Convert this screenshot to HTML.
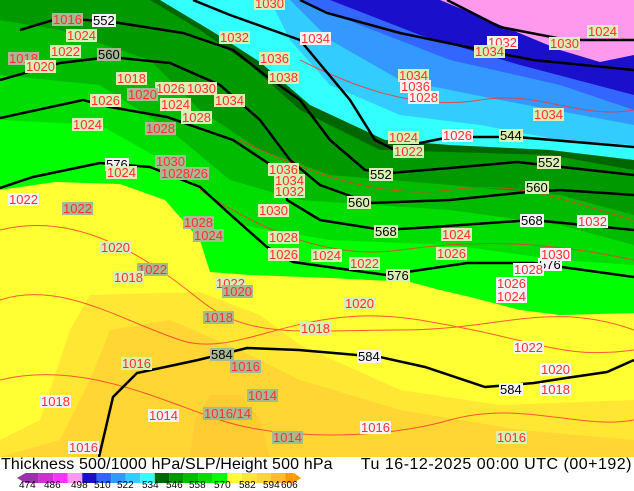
<!DOCTYPE html>
<html><head><meta charset="utf-8"><style>
body{margin:0;width:634px;height:490px;overflow:hidden;background:#fff;font-family:"Liberation Sans",sans-serif}
#m{position:absolute;left:0;top:0}
.l{position:absolute;font:13px/13px "Liberation Sans",sans-serif;color:#ff3030;background:#d9f0b4;padding:0 1px;height:13px}
.g{background:#a8b890}
.w{background:#f4f4f4}
.k{color:#000}
#t{position:absolute;left:0;top:457px;width:634px;height:33px;background:#fff}
#t1{position:absolute;left:1px;top:457px;font:16px/16px "Liberation Sans",sans-serif;letter-spacing:0.15px}
#t2{position:absolute;right:2px;top:457px;font:16px/16px "Liberation Sans",sans-serif;letter-spacing:0.5px}
#lg{position:absolute;left:17px;top:473px}
.n{position:absolute;top:481px;font:10px/10px "Liberation Sans",sans-serif}
</style></head><body>
<svg id="m" width="634" height="457" viewBox="0 0 634 457">
<rect width="634" height="457" fill="#ffff33"/>
<path d="M0,457 L0,440 L40,420 L70,330 L90,295 L200,292 L260,315 L300,345 L400,390 L500,405 L634,400 L634,457Z" fill="#ffe733"/>
<path d="M0,457 L60,440 L90,380 L110,330 L170,320 L240,350 L300,380 L400,410 L520,430 L634,440 L634,457Z" fill="#ffd633"/>
<path d="M190,457 L195,420 L210,395 L240,395 L260,420 L270,457Z" fill="#ffcc33"/>
<path d="M0,0 L0,190 L55,182 L120,184 L165,200 L200,240 L210,272 L250,275 L330,278 L410,282 L440,290 L470,297 L520,310 L560,315 L634,313 L634,0Z" fill="#00ff00"/>
<path d="M0,0 L0,120 L100,125 L180,170 L240,225 L330,240 L450,245 L560,260 L634,265 L634,0Z" fill="#00dd00"/>
<path d="M0,0 L0,75 L100,85 L170,130 L230,180 L300,200 L450,210 L560,225 L634,245 L634,0Z" fill="#00bb00"/>
<path d="M0,0 L0,20 L60,30 L150,60 L200,110 L260,150 L330,175 L450,185 L560,195 L634,215 L634,0Z" fill="#009900"/>
<path d="M150,0 L200,30 L250,65 L300,110 L380,150 L450,152 L550,155 L634,170 L634,0Z" fill="#006600"/>
<path d="M160,0 L210,30 L260,62 L310,105 L385,140 L450,145 L550,150 L634,160 L634,0Z" fill="#33ffff"/>
<path d="M270,0 L290,40 L330,85 L400,115 L480,125 L560,140 L634,145 L634,0Z" fill="#33ccff"/>
<path d="M290,0 L330,40 L400,80 L500,100 L634,125 L634,0Z" fill="#3399ff"/>
<path d="M300,0 L360,25 L450,60 L560,85 L634,110 L634,0Z" fill="#3366ff"/>
<path d="M330,0 L420,35 L520,65 L634,95 L634,0Z" fill="#1a10cc"/>
<path d="M440,0 L500,25 L560,50 L600,62 L634,55 L634,0Z" fill="#ff99ee"/>
<g fill="none" stroke="#ff3030" stroke-width="1" opacity=".8">
<path d="M0,230 C80,210 150,260 200,300 S300,330 400,330 S550,300 634,330"/>
<path d="M0,300 C60,280 120,320 180,340 S300,300 420,320 S560,360 634,350"/>
<path d="M0,380 C80,360 160,400 220,420 S380,440 450,420 S580,430 634,420"/>
<path d="M300,60 C360,90 420,110 480,100 S580,120 634,110"/>
<path d="M240,140 C300,170 380,200 450,190 S560,200 634,220"/>
<path d="M200,190 C260,230 330,260 400,250 S540,240 634,260"/>
</g>
<g fill="none" stroke="#000" stroke-width="2.5">
<path d="M447,0 L500,27 L567,40 L634,40"/>
<path d="M300,0 L327,13 L400,33 L467,47 L533,60 L634,70"/>
<path d="M193,0 L230,15 L300,40 L350,100 L375,140 L395,150 L420,143 L450,137 L517,137 L634,147"/>
<path d="M20,30 L60,18 L113,22 L183,33 L233,50 L265,75 L300,100 L330,140 L365,170 L390,173 L450,168 L517,162 L634,175"/>
<path d="M0,80 L60,63 L110,57 L170,63 L220,85 L260,120 L290,160 L320,185 L370,203 L450,200 L517,193 L560,190 L634,195"/>
<path d="M0,118 L83,100 L110,107 L167,117 L233,140 L283,173 L287,200 L320,220 L383,230 L433,227 L533,220 L634,230"/>
<path d="M0,188 L33,177 L100,163 L150,167 L200,187 L233,217 L267,247 L293,262 L350,270 L387,275 L467,263 L533,263 L634,277"/>
<path d="M99,457 L113,397 L137,373 L198,360 L247,348 L299,350 L380,357 L425,367 L485,387 L534,383 L566,378 L607,372 L634,360"/>
</g>
</svg>
<div class="l g" style="left:52px;top:13px">1016</div>
<div class="l" style="left:66px;top:29px">1024</div>
<div class="l w k" style="left:92px;top:14px">552</div>
<div class="l" style="left:50px;top:45px">1022</div>
<div class="l g k" style="left:97px;top:48px">560</div>
<div class="l g" style="left:8px;top:52px">1018</div>
<div class="l" style="left:25px;top:60px">1020</div>
<div class="l" style="left:116px;top:72px">1018</div>
<div class="l" style="left:155px;top:82px">1026</div>
<div class="l" style="left:186px;top:82px">1030</div>
<div class="l g" style="left:127px;top:88px">1020</div>
<div class="l" style="left:90px;top:94px">1026</div>
<div class="l" style="left:160px;top:98px">1024</div>
<div class="l" style="left:214px;top:94px">1034</div>
<div class="l" style="left:181px;top:111px">1028</div>
<div class="l g" style="left:145px;top:122px">1028</div>
<div class="l" style="left:72px;top:118px">1024</div>
<div class="l g" style="left:155px;top:155px">1030</div>
<div class="l g" style="left:160px;top:167px">1028/26</div>
<div class="l w k" style="left:105px;top:158px">576</div>
<div class="l" style="left:106px;top:166px">1024</div>
<div class="l w" style="left:8px;top:193px">1022</div>
<div class="l g" style="left:62px;top:202px">1022</div>
<div class="l g" style="left:183px;top:216px">1028</div>
<div class="l g" style="left:193px;top:229px">1024</div>
<div class="l" style="left:100px;top:241px">1020</div>
<div class="l g" style="left:137px;top:263px">1022</div>
<div class="l" style="left:113px;top:271px">1018</div>
<div class="l" style="left:215px;top:277px">1022</div>
<div class="l g" style="left:222px;top:285px">1020</div>
<div class="l" style="left:254px;top:-3px">1030</div>
<div class="l" style="left:219px;top:31px">1032</div>
<div class="l w" style="left:300px;top:32px">1034</div>
<div class="l" style="left:259px;top:52px">1036</div>
<div class="l" style="left:268px;top:71px">1038</div>
<div class="l" style="left:398px;top:69px">1034</div>
<div class="l w" style="left:400px;top:80px">1036</div>
<div class="l w" style="left:408px;top:91px">1028</div>
<div class="l w" style="left:487px;top:36px">1032</div>
<div class="l" style="left:474px;top:45px">1034</div>
<div class="l" style="left:549px;top:37px">1030</div>
<div class="l" style="left:587px;top:25px">1024</div>
<div class="l" style="left:533px;top:108px">1034</div>
<div class="l" style="left:388px;top:131px">1024</div>
<div class="l" style="left:393px;top:145px">1022</div>
<div class="l w" style="left:442px;top:129px">1026</div>
<div class="l k" style="left:499px;top:129px">544</div>
<div class="l k" style="left:537px;top:156px">552</div>
<div class="l k" style="left:369px;top:168px">552</div>
<div class="l k" style="left:525px;top:181px">560</div>
<div class="l k" style="left:347px;top:196px">560</div>
<div class="l w k" style="left:520px;top:214px">568</div>
<div class="l k" style="left:374px;top:225px">568</div>
<div class="l w" style="left:577px;top:215px">1032</div>
<div class="l" style="left:268px;top:163px">1036</div>
<div class="l" style="left:274px;top:174px">1034</div>
<div class="l" style="left:274px;top:185px">1032</div>
<div class="l" style="left:258px;top:204px">1030</div>
<div class="l" style="left:268px;top:231px">1028</div>
<div class="l" style="left:268px;top:248px">1026</div>
<div class="l" style="left:311px;top:249px">1024</div>
<div class="l" style="left:441px;top:228px">1024</div>
<div class="l" style="left:436px;top:247px">1026</div>
<div class="l" style="left:349px;top:257px">1022</div>
<div class="l k" style="left:386px;top:269px">576</div>
<div class="l w k" style="left:538px;top:258px">576</div>
<div class="l w" style="left:540px;top:248px">1030</div>
<div class="l w" style="left:513px;top:263px">1028</div>
<div class="l w" style="left:496px;top:277px">1026</div>
<div class="l w" style="left:496px;top:290px">1024</div>
<div class="l" style="left:344px;top:297px">1020</div>
<div class="l g" style="left:203px;top:311px">1018</div>
<div class="l" style="left:300px;top:322px">1018</div>
<div class="l w" style="left:513px;top:341px">1022</div>
<div class="l w" style="left:540px;top:363px">1020</div>
<div class="l w" style="left:540px;top:383px">1018</div>
<div class="l g k" style="left:210px;top:348px">584</div>
<div class="l w k" style="left:357px;top:350px">584</div>
<div class="l w k" style="left:499px;top:383px">584</div>
<div class="l" style="left:121px;top:357px">1016</div>
<div class="l g" style="left:230px;top:360px">1016</div>
<div class="l g" style="left:247px;top:389px">1014</div>
<div class="l w" style="left:40px;top:395px">1018</div>
<div class="l w" style="left:148px;top:409px">1014</div>
<div class="l g" style="left:203px;top:407px">1016/14</div>
<div class="l g" style="left:272px;top:431px">1014</div>
<div class="l w" style="left:360px;top:421px">1016</div>
<div class="l" style="left:496px;top:431px">1016</div>
<div class="l w" style="left:68px;top:441px">1016</div>
<div id="t"></div>
<div id="t1">Thickness 500/1000 hPa/SLP/Height 500 hPa</div>
<div id="t2">Tu 16-12-2025 00:00 UTC (00+192)</div>
<svg id="lg" width="284" height="10" viewBox="0 0 235 11" preserveAspectRatio="none">
<polygon points="0,5.5 7,0 7,11" fill="#9933aa"/>
<rect x="7" y="0" width="11" height="11" fill="#9933aa"/>
<rect x="18" y="0" width="12" height="11" fill="#cc33cc"/>
<rect x="30" y="0" width="12" height="11" fill="#ff33ff"/>
<rect x="42" y="0" width="12" height="11" fill="#ff99ee"/>
<rect x="54" y="0" width="12" height="11" fill="#1a10cc"/>
<rect x="66" y="0" width="12" height="11" fill="#3366ff"/>
<rect x="78" y="0" width="12" height="11" fill="#3399ff"/>
<rect x="90" y="0" width="12" height="11" fill="#33ccff"/>
<rect x="102" y="0" width="12" height="11" fill="#33ffff"/>
<rect x="114" y="0" width="12" height="11" fill="#006600"/>
<rect x="126" y="0" width="12" height="11" fill="#009900"/>
<rect x="138" y="0" width="12" height="11" fill="#00bb00"/>
<rect x="150" y="0" width="12" height="11" fill="#00dd00"/>
<rect x="162" y="0" width="12" height="11" fill="#00ff00"/>
<rect x="174" y="0" width="12" height="11" fill="#ffff33"/>
<rect x="186" y="0" width="12" height="11" fill="#ffe733"/>
<rect x="198" y="0" width="12" height="11" fill="#ffd633"/>
<rect x="210" y="0" width="12" height="11" fill="#ffbb33"/>
<rect x="222" y="0" width="7" height="11" fill="#ff9900"/>
<polygon points="229,0 235,5.5 229,11" fill="#ff9900"/>
</svg>
<div class="n" style="left:19px">474</div><div class="n" style="left:44px">486</div><div class="n" style="left:71px">498</div><div class="n" style="left:94px">510</div><div class="n" style="left:117px">522</div><div class="n" style="left:142px">534</div><div class="n" style="left:166px">546</div><div class="n" style="left:189px">558</div><div class="n" style="left:214px">570</div><div class="n" style="left:239px">582</div><div class="n" style="left:263px">594</div><div class="n" style="left:281px">606</div>
</body></html>
